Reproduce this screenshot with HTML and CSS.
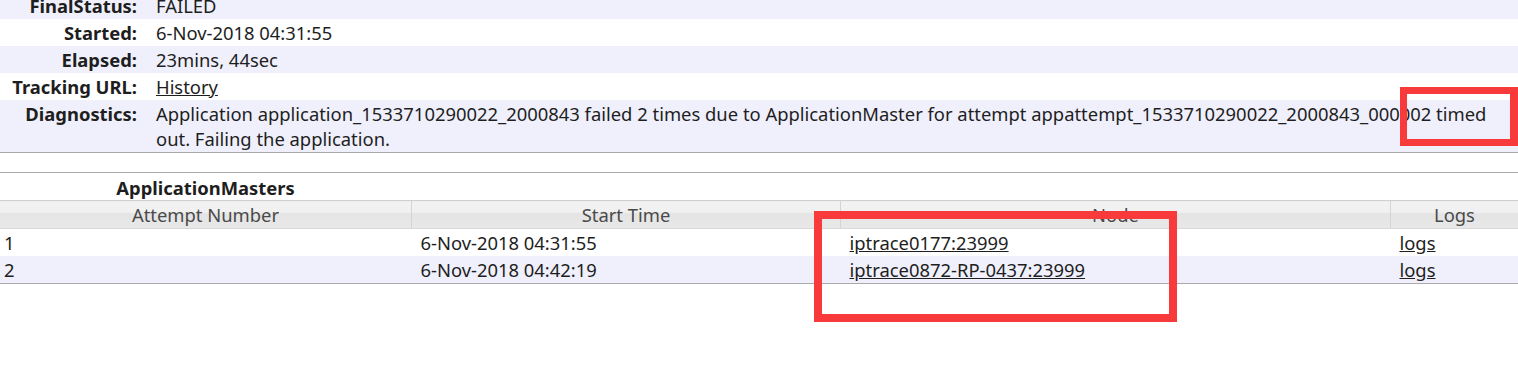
FILE: index.html
```html
<!DOCTYPE html>
<html lang="en">
<head>
    <meta charset="UTF-8">
    <title>Application Overview</title>
    <link rel="stylesheet" href="styles.css">
</head>
<body>

<div class="page">
    <table class="info">
        <tr class="odd">
            <th>FinalStatus:</th>
            <td>FAILED</td>
        </tr>
        <tr class="even">
            <th>Started:</th>
            <td>6-Nov-2018 04:31:55</td>
        </tr>
        <tr class="odd">
            <th>Elapsed:</th>
            <td>23mins, 44sec</td>
        </tr>
        <tr class="even">
            <th>Tracking URL:</th>
            <td><a href="#">History</a></td>
        </tr>
        <tr class="odd">
            <th>Diagnostics:</th>
            <td>Application application_1533710290022_2000843 failed 2 times due to ApplicationMaster for attempt appattempt_1533710290022_2000843_000002 timed out. Failing the application.</td>
        </tr>
    </table>

    <div class="masters">
        <div class="caption">ApplicationMasters</div>
        <table class="attempts">
            <thead>
                <tr>
                    <th class="col-num">Attempt Number</th>
                    <th class="col-time">Start Time</th>
                    <th class="col-node">Node</th>
                    <th>Logs</th>
                </tr>
            </thead>
            <tbody>
                <tr class="even">
                    <td>1</td>
                    <td>6-Nov-2018 04:31:55</td>
                    <td><a href="#">iptrace0177:23999</a></td>
                    <td><a href="#">logs</a></td>
                </tr>
                <tr class="odd">
                    <td>2</td>
                    <td>6-Nov-2018 04:42:19</td>
                    <td><a href="#">iptrace0872-RP-0437:23999</a></td>
                    <td><a href="#">logs</a></td>
                </tr>
            </tbody>
        </table>
    </div>
</div>

<div class="mark mark-diag"></div>
<div class="mark mark-node"></div>

</body>
</html>
```

FILE: styles.css
```css
body {
    font-family: "Noto Sans", "Open Sans", sans-serif;
    font-size: 18.4px;
    margin: 0;
    padding: 0;
    background-color: #fff;
    color: #1e1e1e;
    overflow: hidden;
}
a {
    color: #1e1e1e;
    text-decoration: underline;
}
.page {
    margin-top: -8px;
}
table {
    border-collapse: collapse;
    width: 100%;
}
.odd {
    background-color: #f0f0fc;
}
.even {
    background-color: #fff;
}
.info {
    border-bottom: 1px solid #aaa;
}
.info th {
    width: 137px;
    text-align: right;
    vertical-align: top;
    font-weight: bold;
    padding: 1px 9px 1px 0;
    line-height: 25px;
    white-space: nowrap;
}
.info td {
    padding: 1px 8px 1px 10px;
    line-height: 25px;
}
.masters {
    margin-top: 19px;
    border-top: 1px solid #aaa;
}
.caption {
    width: 411px;
    text-align: center;
    font-weight: bold;
    height: 27px;
    line-height: 29px;
}
.attempts {
    table-layout: fixed;
    border-bottom: 1px solid #aaa;
}
.attempts th {
    font-weight: normal;
    color: #4a4a4a;
    height: 27px;
    padding: 0;
    line-height: 27px;
    border-top: 1px solid #d0d0d0;
    border-bottom: 1px solid #d8d8d8;
    border-left: 1px solid #d4d4d4;
    background: linear-gradient(#f2f2f2 0%, #f0f0f0 40%, #e4e4e4 45%, #e8e8e8 100%);
}
.attempts th:first-child {
    border-left: none;
}
.col-num {
    width: 411px;
}
.col-time {
    width: 428px;
}
.col-node {
    width: 549px;
}
.attempts td {
    padding: 0 10px 0 9px;
    height: 27px;
    line-height: 27px;
    white-space: nowrap;
}
.attempts td:first-child {
    padding-left: 4px;
}
.mark {
    position: absolute;
    border: 7px solid #f83a3a;
    box-sizing: border-box;
}
.mark-diag {
    left: 1400px;
    top: 87px;
    width: 118px;
    height: 59px;
    border-right-width: 8px;
}
.mark-node {
    left: 814px;
    top: 211px;
    width: 363px;
    height: 111px;
    border-width: 8px;
}
```
